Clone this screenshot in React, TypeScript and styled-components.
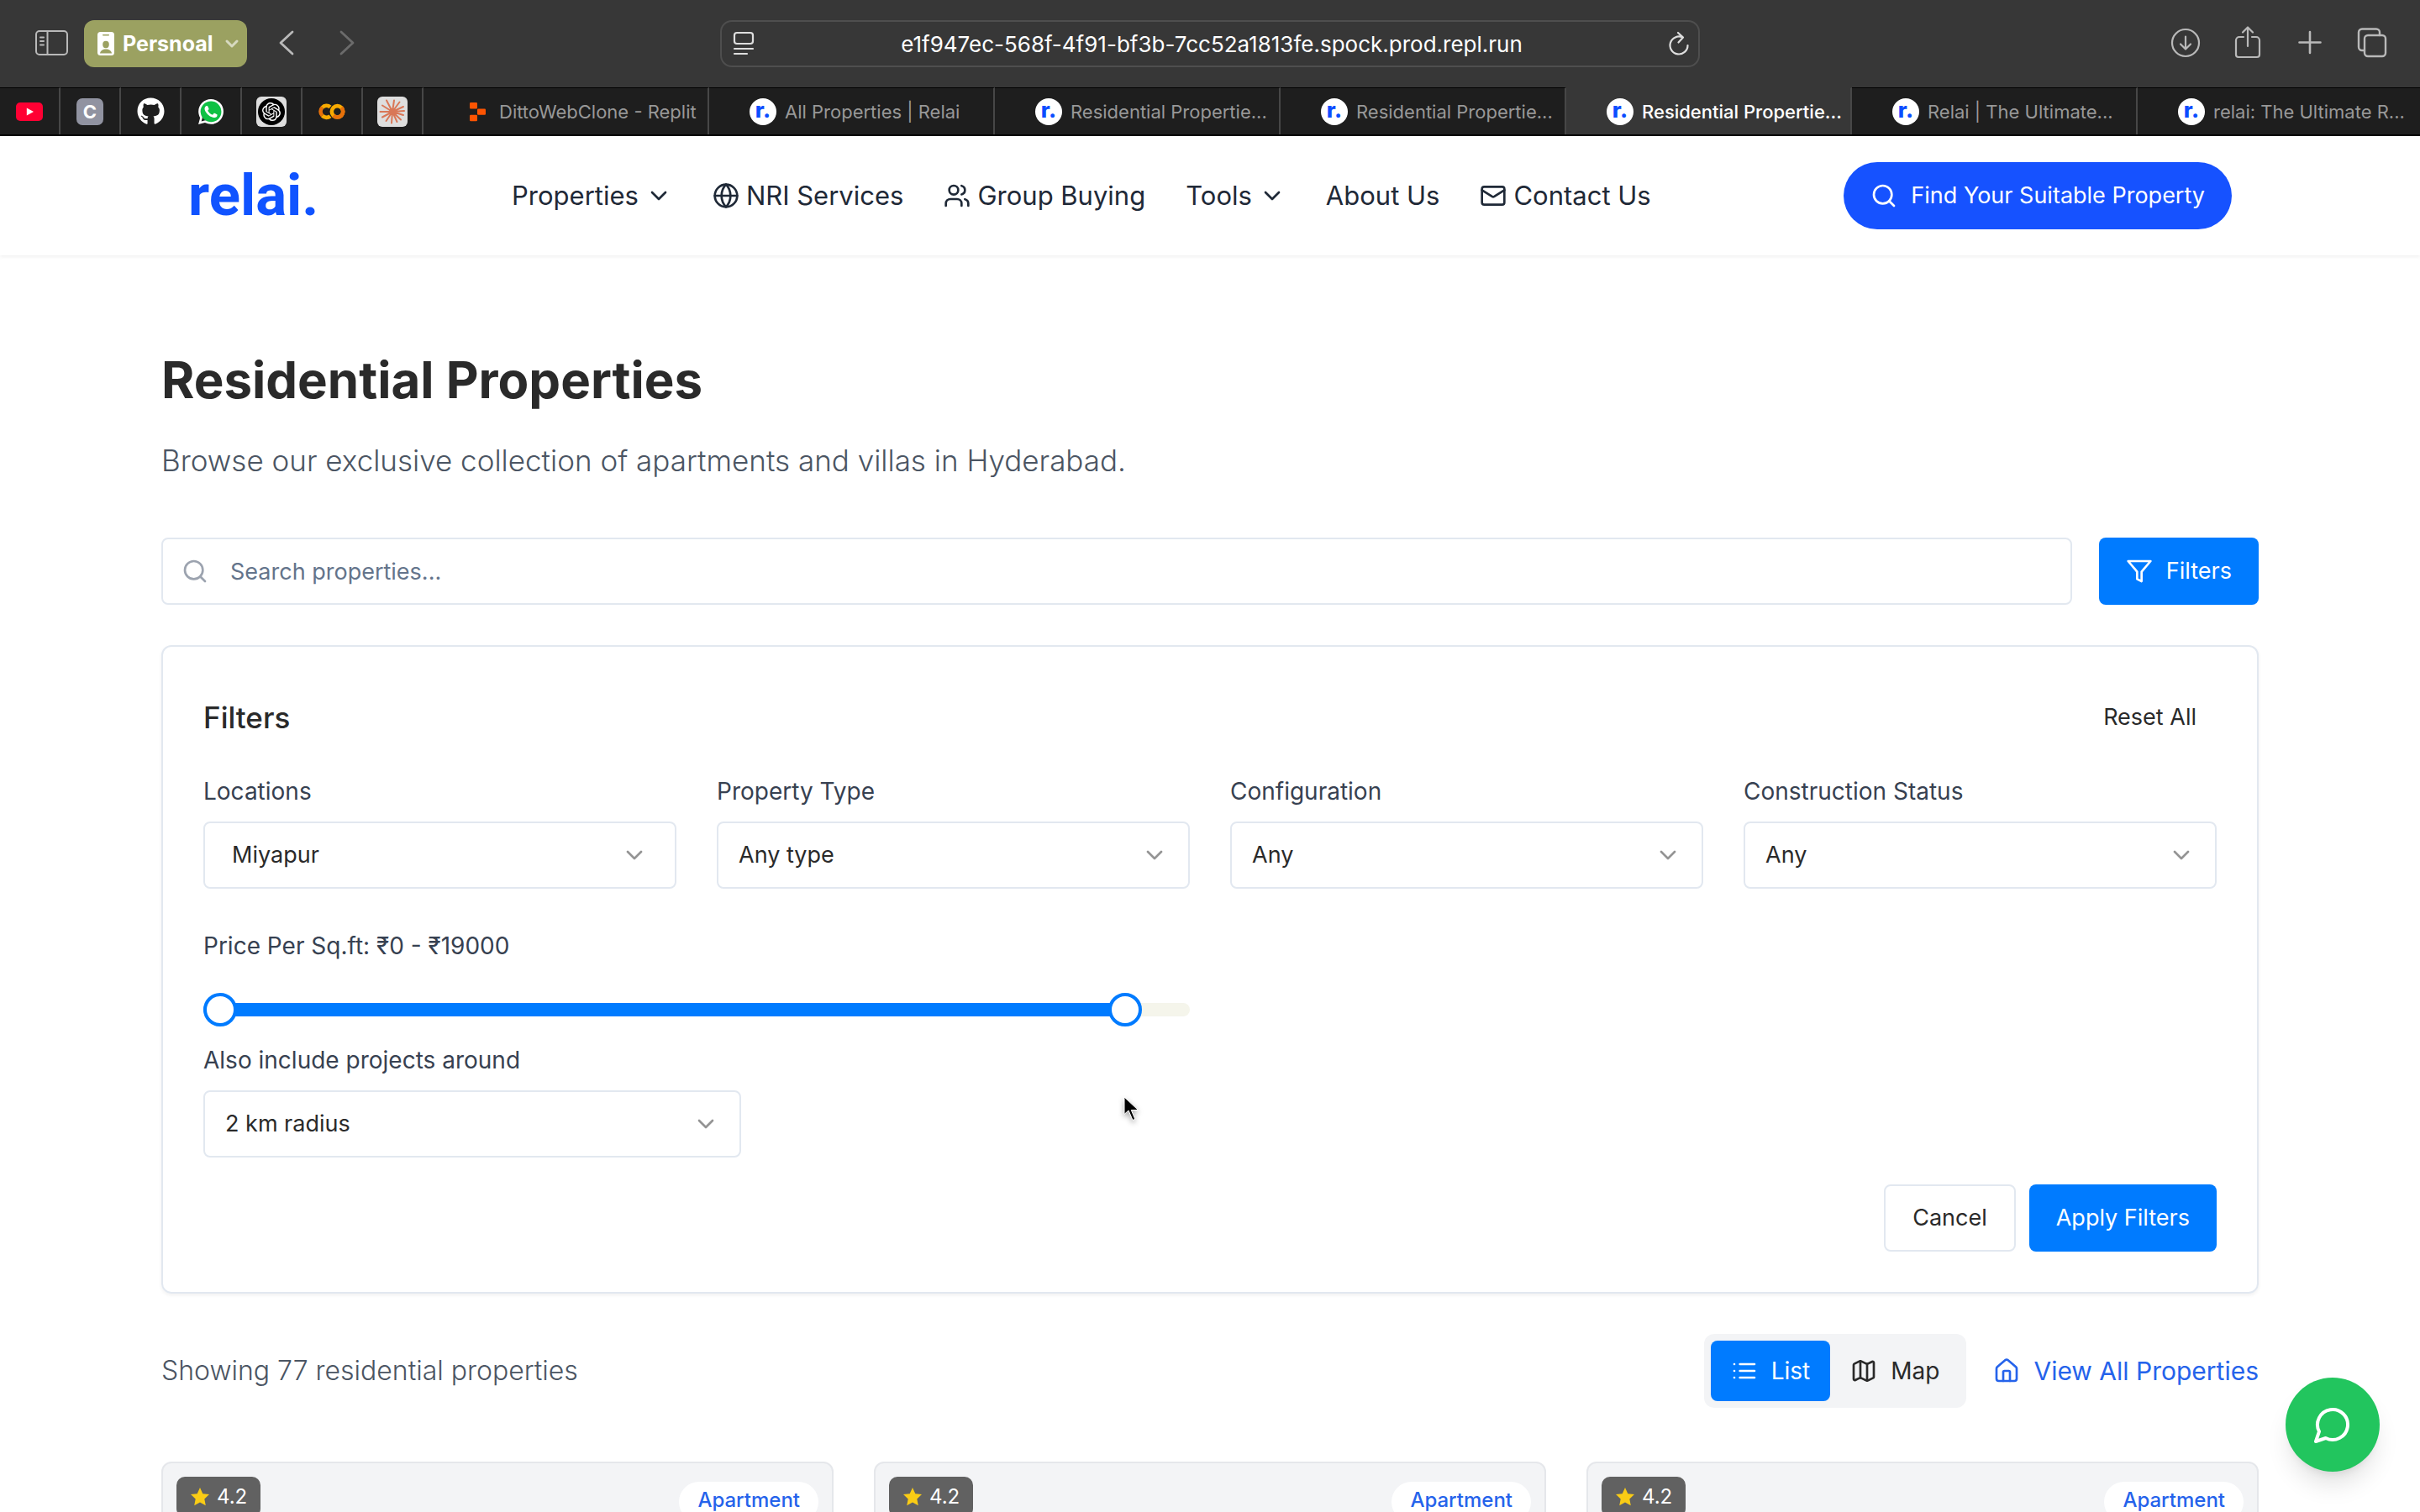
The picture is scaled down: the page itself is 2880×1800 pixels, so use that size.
import React from "react";
import styled, { createGlobalStyle } from "styled-components";
import { ChevronDown, Globe, House, Mail, Map as MapIcon, Search, Users } from "lucide-react";
import { FaGithub } from "react-icons/fa";
import { SiOpenai, SiWhatsapp } from "react-icons/si";

const GlobalStyle = createGlobalStyle`
  *, *::before, *::after { box-sizing: border-box; }
  body {
    margin: 0;
    background: #fff;
    color: #2a2a2a;
    font-family: Inter, "Noto Sans", sans-serif;
    font-size: 27px;
    line-height: 40px;
  }
  button, input, select { font: inherit; color: inherit; margin: 0; }
  h1, h2, p { margin: 0; }
  a { color: inherit; text-decoration: none; }
`;

/* ---------- Browser window ---------- */

const BrowserWindow = styled.div`
  display: flex;
  flex-direction: column;
  height: 100vh;
  overflow: hidden;
`;

const Toolbar = styled.div`
  display: grid;
  grid-template-columns: 1fr minmax(0, 1166px) 1fr;
  align-items: center;
  height: 104px;
  flex: none;
  background: #373737;
  color: #b9b9b9;
`;

const ToolGroup = styled.div<{ $end?: boolean }>`
  display: flex;
  align-items: center;
  gap: ${(p) => (p.$end ? 30 : 16)}px;
  padding: 0 35px 0 40px;
  justify-content: ${(p) => (p.$end ? "flex-end" : "flex-start")};
`;

const HistoryGroup = styled.div`
  display: flex;
  gap: 36px;
  padding-left: 13px;
`;

const ToolButton = styled.button<{ $width?: number }>`
  display: flex;
  align-items: center;
  justify-content: center;
  width: ${(p) => p.$width ?? 44}px;
  height: 56px;
  padding: 0;
  border: 0;
  background: none;
  flex: none;

  &:disabled { opacity: 0.4; }
`;

const ProfileButton = styled.button`
  display: flex;
  align-items: center;
  gap: 10px;
  height: 56px;
  padding: 0 6px 0 16px;
  border: 0;
  border-radius: 12px;
  background: #9ba161;
  color: #fff;
  font-size: 25px;
  font-weight: 700;
  white-space: nowrap;
`;

const AddressBar = styled.div`
  display: flex;
  align-items: center;
  height: 56px;
  padding: 0 8px 0 12px;
  border: 2px solid #4e4e4e;
  border-radius: 14px;
  color: #dedede;
`;

const AddressInput = styled.input`
  flex: 1;
  min-width: 0;
  height: 48px;
  border: 0;
  padding: 0;
  background: none;
  color: #fff;
  font-size: 26px;
  font-weight: 400;
  text-align: center;
  outline: none;
`;

const TabStrip = styled.div`
  display: flex;
  flex: none;
  height: 58px;
  overflow: hidden;
  background: #1e1e1e;
  border-bottom: 2px solid #000;
`;

const PinnedTab = styled.button`
  display: flex;
  align-items: center;
  justify-content: center;
  flex: none;
  width: 72px;
  padding: 0;
  border: 0;
  border-top: 1px solid #000;
  border-right: 2px solid #474747;
  background: none;
`;

const Tab = styled.button<{ $active?: boolean }>`
  display: flex;
  align-items: center;
  gap: 10px;
  flex: none;
  width: 340px;
  padding: 0 8px 0 48px;
  border: 0;
  border-top: 1px solid ${(p) => (p.$active ? "#373737" : "#000")};
  border-right: 2px solid #474747;
  background: ${(p) => (p.$active ? "#373737" : "none")};
  color: ${(p) => (p.$active ? "#fff" : "#989898")};
  font-size: 22px;
  font-weight: ${(p) => (p.$active ? 500 : 400)};
  line-height: 32px;
  white-space: nowrap;

  svg { flex: none; }
`;

const Favicon = styled.span`
  display: flex;
  align-items: center;
  justify-content: center;
  flex: none;
  width: 32px;
  height: 32px;
  border-radius: 50%;
  background: #fff;
  color: #0b4dff;
  font-size: 26px;
  font-weight: 800;
  line-height: 28px;
  padding-bottom: 4px;
`;

const LetterTile = styled.span`
  display: flex;
  align-items: center;
  justify-content: center;
  width: 32px;
  height: 32px;
  border-radius: 7px;
  background: #9193a1;
  color: #fff;
  font-size: 22px;
  font-weight: 700;
  line-height: 32px;
`;

const LightTile = styled.span`
  display: flex;
  align-items: center;
  justify-content: center;
  width: 36px;
  height: 36px;
  border-radius: 6px;
  background: #dedede;
`;

const RoundBadge = styled.span<{ $color: string }>`
  display: flex;
  align-items: center;
  justify-content: center;
  width: 32px;
  height: 32px;
  border-radius: 50%;
  background: ${(p) => p.$color};
  color: #fff;
`;

const WhatsAppMark = styled(SiWhatsapp)`
  width: 30px;
  height: 30px;
  color: #fff;
  background: radial-gradient(circle at 52% 48%, #0fc144 58%, transparent 60%);
`;

const Page = styled.div`
  position: relative;
  flex: 1;
  min-height: 0;
  overflow: hidden;
`;

/* ---------- Site header ---------- */

const Header = styled.header`
  height: 142px;
  box-shadow: 0 2px 4px rgba(0, 0, 0, 0.06);
`;

const HeaderInner = styled.div`
  display: flex;
  align-items: center;
  justify-content: space-between;
  max-width: 2496px;
  height: 100%;
  margin: 0 auto;
  padding: 0 32px;
`;

const Logo = styled.a`
  color: #1053ff;
  font-family: Roboto, Inter, sans-serif;
  font-size: 69px;
  font-weight: 700;
  line-height: 80px;
`;

const Nav = styled.nav`
  display: flex;
  align-items: center;
  gap: 48px;
`;

const navItem = `
  display: flex;
  align-items: center;
  gap: 8px;
  padding: 0;
  border: 0;
  background: none;
  color: #1f2937;
  font-size: 31px;
  font-weight: 400;
  line-height: 48px;
  white-space: nowrap;
`;

const NavLink = styled.a`${navItem}`;
const NavMenu = styled.button`${navItem}`;

const Button = styled.button<{ $kind?: "primary" | "outline" | "ghost"; $pill?: boolean }>`
  display: flex;
  align-items: center;
  justify-content: center;
  gap: 16px;
  flex: none;
  height: ${(p) => (p.$kind === "ghost" ? 72 : 80)}px;
  padding: 0 ${(p) => (p.$kind === "ghost" ? 24 : 32)}px;
  border: ${(p) => (p.$kind === "outline" ? "2px solid #e2e8f0" : "0")};
  border-radius: ${(p) => (p.$pill ? 40 : 8)}px;
  background: ${(p) => (p.$pill ? "#1652ff" : p.$kind === "primary" ? "#007bff" : "transparent")};
  color: ${(p) => (p.$kind === "primary" ? "#fff" : "#2a2a2a")};
  font-size: 27px;
  font-weight: 400;
  white-space: nowrap;
`;

/* ---------- Listing page ---------- */

const Main = styled.main`
  max-width: 2496px;
  margin: 0 auto;
  padding-top: 112px;
`;

const Title = styled.h1`
  font-size: 60px;
  font-weight: 700;
  line-height: 72px;
  color: #2a2a2a;
`;

const Subtitle = styled.p`
  margin-top: 32px;
  color: #4b5563;
  font-size: 35px;
  font-weight: 300;
  line-height: 56px;
`;

const SearchRow = styled.form`
  display: flex;
  gap: 32px;
  margin-top: 64px;
`;

const SearchBox = styled.label`
  display: flex;
  align-items: center;
  gap: 26px;
  flex: 1;
  height: 80px;
  padding: 0 22px;
  border: 2px solid #e2e8f0;
  border-radius: 8px;
  color: #9ca3af;
`;

const SearchInput = styled.input`
  flex: 1;
  height: 72px;
  padding: 0;
  border: 0;
  outline: none;
  background: none;
  color: #2a2a2a;

  &::placeholder { color: #64748b; opacity: 1; }
`;

const Panel = styled.section`
  margin-top: 48px;
  padding: 48px;
  border: 2px solid #e2e8f0;
  border-radius: 12px;
  box-shadow: 0 2px 4px rgba(0, 0, 0, 0.06);
`;

const PanelHead = styled.div`
  display: flex;
  align-items: center;
  justify-content: space-between;
  margin-bottom: 32px;
`;

const PanelTitle = styled.h2`
  font-size: 35px;
  font-weight: 500;
  line-height: 48px;
`;

const FieldGrid = styled.div`
  display: grid;
  grid-template-columns: repeat(4, 1fr);
  gap: 48px;
`;

const Field = styled.div`
  display: flex;
  flex-direction: column;
  gap: 16px;
`;

const Label = styled.label`
  color: #374151;
  font-size: 28px;
`;

const SelectWrap = styled.div<{ $inset?: number }>`
  display: grid;
  align-items: center;

  select, svg { grid-area: 1 / 1; }
  svg {
    justify-self: end;
    margin-right: ${(p) => p.$inset ?? 26}px;
    color: #949494;
    pointer-events: none;
  }
  select { padding-left: ${(p) => (p.$inset ?? 26) - 2}px; }
`;

const Select = styled.select`
  appearance: none;
  width: 100%;
  height: 80px;
  border: 2px solid #e2e8f0;
  border-radius: 8px;
  background: #fff;
  color: #2a2a2a;
`;

const PriceField = styled.fieldset`
  grid-column: span 2;
  display: flex;
  flex-direction: column;
  gap: 36px;
  min-width: 0;
  margin: 0;
  padding: 0;
  border: 0;
`;

const Range = styled.div`
  display: grid;
  align-items: center;
  height: 40px;
`;

const RangeTrack = styled.div`
  grid-area: 1 / 1;
  height: 16px;
  border-radius: 8px;
  background: #f5f5eb;
  overflow: hidden;
`;

const RangeFill = styled.div`
  height: 100%;
  background: #007bff;
`;

const RangeInput = styled.input`
  grid-area: 1 / 1;
  appearance: none;
  width: 100%;
  height: 40px;
  background: none;
  pointer-events: none;

  &::-webkit-slider-thumb {
    appearance: none;
    width: 40px;
    height: 40px;
    border: 4px solid #007bff;
    border-radius: 50%;
    background: #fff;
    pointer-events: auto;
  }
`;

const RadiusField = styled(Field)`
  width: 640px;
  max-width: 100%;
  margin-top: 20px;
`;

const PanelActions = styled.div`
  display: flex;
  justify-content: flex-end;
  gap: 16px;
  margin-top: 32px;
`;

const ResultBar = styled.div`
  display: flex;
  align-items: center;
  gap: 32px;
  margin-top: 48px;
`;

const ResultCount = styled.p`
  flex: 1;
  color: #4b5563;
  font-size: 32px;
  font-weight: 300;
`;

const ViewToggle = styled.div`
  display: flex;
  padding: 8px;
  border-radius: 12px;
  background: #f3f4f6;
`;

const ToggleButton = styled(Button)`
  height: 72px;
  padding: 0 24px;
  font-size: 28px;
`;

const AllLink = styled.a`
  display: flex;
  align-items: center;
  gap: 16px;
  color: #2563eb;
  font-size: 30px;
`;

const CardGrid = styled.div`
  display: grid;
  grid-template-columns: repeat(3, 1fr);
  gap: 48px;
  margin-top: 64px;
`;

const Card = styled.article`
  display: flex;
  align-items: flex-start;
  justify-content: space-between;
  height: 480px;
  padding: 16px;
  border: 2px solid #e5e7eb;
  border-radius: 12px;
  background: #f3f4f6;
`;

const Rating = styled.span`
  display: flex;
  align-items: center;
  gap: 8px;
  height: 48px;
  padding: 0 16px;
  border-radius: 10px;
  background: #616161;
  color: #fff;
  font-size: 24px;
`;

const TypeBadge = styled.span`
  height: 48px;
  margin-top: 6px;
  padding: 0 22px;
  border-radius: 24px;
  background: #fff;
  color: #2563eb;
  font-size: 24px;
  font-weight: 500;
  line-height: 44px;
`;

const ChatButton = styled.button`
  position: absolute;
  right: 48px;
  bottom: 48px;
  display: flex;
  align-items: center;
  justify-content: center;
  width: 112px;
  height: 112px;
  padding: 0;
  border: 0;
  border-radius: 50%;
  background: #22c55e;
  color: #fff;
  box-shadow: 0 20px 30px -6px rgba(0, 0, 0, 0.12), 0 8px 12px -8px rgba(0, 0, 0, 0.12);
`;

const Pointer = styled.svg`
  position: absolute;
  left: 46.4%;
  top: 1142px;
  filter: drop-shadow(0 3px 3px rgba(0, 0, 0, 0.35));
`;

/* ---------- Drawings ---------- */

const Stroke = ({ size = 32, width = 2, box = "0 0 24 24", children }: {
  size?: number; width?: number; box?: string; children: React.ReactNode;
}) => (
  <svg width={size} height={size} viewBox={box} fill="none" stroke="currentColor" strokeWidth={width}
    strokeLinecap="round" strokeLinejoin="round" aria-hidden="true">{children}</svg>
);

const FilterIcon = () => (
  <Stroke><polygon points="22 3 2 3 10 12.46 10 19 14 21 14 12.46 22 3" /></Stroke>
);

const ListIcon = () => (
  <Stroke><path d="M8 6h13M8 12h13M8 18h13M3 6h.01M3 12h.01M3 18h.01" /></Stroke>
);

const SidebarIcon = () => (
  <Stroke size={44} width={2} box="0 0 44 44">
    <rect x="3" y="7" width="37" height="28" rx="4" />
    <path d="M16.500 7v28M8 14.500h4M8 19h4M8 23.500h4" />
  </Stroke>
);

const ProfileIcon = () => (
  <svg width="20" height="28" viewBox="0 0 20 28" aria-hidden="true">
    <rect width="20" height="28" rx="3.500" fill="#fff" />
    <rect x="6" y="3" width="8" height="1.500" rx=".7" fill="#9ba161" />
    <ellipse cx="10" cy="15" rx="3.800" ry="4.200" fill="#9ba161" />
    <path d="M3 25.500c.6-3.400 3.500-5 7-5s6.400 1.600 7 5z" fill="#9ba161" />
  </svg>
);

const DownloadIcon = () => (
  <Stroke size={44} width={2.2} box="0 0 44 44">
    <circle cx="22" cy="21" r="16" /><path d="M22 13.500v14.500M16 22.500l6 6 6-6" />
  </Stroke>
);

const ShareIcon = () => (
  <Stroke size={44} width={2.2} box="0 0 44 44">
    <path d="M17 14h-5a4 4 0 0 0-4 4v17a3 3 0 0 0 3 3h22a3 3 0 0 0 3-3V18a4 4 0 0 0-4-4h-5M22 25V3M16 8.500l6-6 6 6" />
  </Stroke>
);

const PlusIcon = () => (
  <Stroke size={44} width={2.6} box="0 0 44 44"><path d="M22 8v25M9.500 20.500h25" /></Stroke>
);

const TabsIcon = () => (
  <Stroke size={44} width={2.4} box="0 0 44 44">
    <rect x="13" y="12" width="25" height="25" rx="4" />
    <path d="M13 30h-3a4 4 0 0 1-4-4V8.500a4 4 0 0 1 4-4h17a4 4 0 0 1 4 4V12" />
  </Stroke>
);

const ReaderIcon = () => (
  <Stroke size={30} width={2.2} box="0 0 30 30">
    <rect x="3" y="2" width="22" height="13" rx="3" /><path d="M3 21h22M3 27h15" />
  </Stroke>
);

const ReloadIcon = () => (
  <Stroke size={30} width={2.2} box="0 0 30 30">
    <path d="M19.500 7.500A10.500 10.500 0 1 0 25.500 17M14 2l6 5.500-5.500 6" />
  </Stroke>
);

const YouTubeIcon = () => (
  <svg width="32" height="22" viewBox="0 0 32 22" aria-hidden="true">
    <rect width="32" height="22" rx="5" fill="#ff0033" /><path d="M12.800 6.600v8.800l8.200-4.400z" fill="#fff" />
  </svg>
);

const ColabIcon = () => (
  <svg width="32" height="20" viewBox="0 0 32 20" fill="none" strokeWidth="4.600" aria-hidden="true">
    <path d="M14 4.500A6.700 6.700 0 0 0 4.600 5" stroke="#f9ab00" />
    <path d="M4.600 4.900a6.700 6.700 0 0 0 0 9.700" stroke="#e8710a" />
    <path d="M4.600 14.600a6.700 6.700 0 0 0 9.400.6" stroke="#f9ab00" />
    <circle cx="22.500" cy="9.800" r="6.700" stroke="#f9ab00" />
    <path d="M27.300 5a6.700 6.700 0 0 1-9.500 9.500" stroke="#e8710a" />
  </svg>
);

const ClaudeIcon = () => (
  <svg width="32" height="32" viewBox="-16 -16 32 32" stroke="#d97757" strokeWidth="2" strokeLinecap="round" aria-hidden="true">
    <circle r="4" fill="#d97757" stroke="none" />
    <path d="M0 0L2-13.500M0 0L8.500-11.500M0 0L13-6M0 0L14-1M0 0L13 4M0 0L10 9.500M0 0L5.500 12M0 0L-1 13.500M0 0L-7.500 11M0 0L-12 6.500M0 0L-14.500 0M0 0L-12-7.500M0 0L-7-13.500" />
  </svg>
);

const ReplitIcon = () => (
  <svg width="32" height="32" viewBox="0 0 32 32" fill="#fd5402" aria-hidden="true">
    <rect x="7" y="5" width="9" height="7.400" rx="1.200" />
    <rect x="16" y="12.400" width="10" height="7.400" rx="1.200" />
    <rect x="7" y="19.800" width="9" height="7.400" rx="1.200" />
  </svg>
);

/* ---------- Data ---------- */

const TABS = [
  { title: "All Properties | Relai" },
  { title: "Residential Propertie..." },
  { title: "Residential Propertie..." },
  { title: "Residential Propertie...", active: true },
  { title: "Relai | The Ultimate..." },
  { title: "relai: The Ultimate R..." },
];

const FILTERS = [
  { id: "locations", label: "Locations", value: "Miyapur", inset: 34 },
  { id: "type", label: "Property Type", value: "Any type" },
  { id: "configuration", label: "Configuration", value: "Any" },
  { id: "status", label: "Construction Status", value: "Any" },
];

const PRICE_MAX = 20000;
const price = { low: 0, high: 19000 };

const PINNED = [
  { name: "YouTube", icon: <YouTubeIcon /> },
  { name: "C", icon: <LetterTile>C</LetterTile> },
  { name: "GitHub", icon: <FaGithub size={33} color="#fff" /> },
  { name: "WhatsApp", icon: <WhatsAppMark /> },
  { name: "ChatGPT", icon: <LightTile><RoundBadge $color="#000"><SiOpenai size={22} /></RoundBadge></LightTile> },
  { name: "Colab", icon: <ColabIcon /> },
  { name: "Claude", icon: <LightTile><ClaudeIcon /></LightTile> },
];

const SelectField = ({ id, label, value, inset }: { id: string; label: string; value: string; inset?: number }) => (
  <>
    <Label htmlFor={id}>{label}</Label>
    <SelectWrap $inset={inset}>
      <Select id={id} defaultValue={value}><option>{value}</option></Select>
      <ChevronDown size={32} strokeWidth={2} />
    </SelectWrap>
  </>
);

export default function App() {
  return (
    <BrowserWindow>
      <GlobalStyle />
      <Toolbar>
        <ToolGroup>
          <ToolButton aria-label="Sidebar"><SidebarIcon /></ToolButton>
          <ProfileButton>
            <ProfileIcon />
            Persnoal
            <Stroke size={24} width={3}><path d="M6 9l6 6 6-6" opacity=".6" /></Stroke>
          </ProfileButton>
          <HistoryGroup>
            <ToolButton $width={36} aria-label="Back">
              <Stroke size={36} width={2.8} box="0 0 36 36"><path d="M25 4L11 17l14 13" /></Stroke>
            </ToolButton>
            <ToolButton $width={36} aria-label="Forward" disabled>
              <Stroke size={36} width={2.8} box="0 0 36 36"><path d="M11 4l14 13-14 13" /></Stroke>
            </ToolButton>
          </HistoryGroup>
        </ToolGroup>
        <AddressBar>
          <ReaderIcon />
          <AddressInput aria-label="Address" defaultValue="e1f947ec-568f-4f91-bf3b-7cc52a1813fe.spock.prod.repl.run" />
          <ReloadIcon />
        </AddressBar>
        <ToolGroup $end>
          <ToolButton aria-label="Downloads"><DownloadIcon /></ToolButton>
          <ToolButton aria-label="Share"><ShareIcon /></ToolButton>
          <ToolButton aria-label="New tab"><PlusIcon /></ToolButton>
          <ToolButton aria-label="All tabs"><TabsIcon /></ToolButton>
        </ToolGroup>
      </Toolbar>
      <TabStrip>
        {PINNED.map((p) => <PinnedTab key={p.name} aria-label={p.name}>{p.icon}</PinnedTab>)}
        <Tab><ReplitIcon />DittoWebClone - Replit</Tab>
        {TABS.map((t, i) => (
          <Tab key={i} $active={t.active}><Favicon>r.</Favicon>{t.title}</Tab>
        ))}
      </TabStrip>

      <Page>
        <Header>
          <HeaderInner>
            <Logo href="#">relai.</Logo>
            <Nav>
              <NavMenu>Properties<ChevronDown size={32} /></NavMenu>
              <NavLink href="#"><Globe size={32} />NRI Services</NavLink>
              <NavLink href="#"><Users size={32} />Group Buying</NavLink>
              <NavMenu>Tools<ChevronDown size={32} /></NavMenu>
              <NavLink href="#">About Us</NavLink>
              <NavLink href="#"><Mail size={32} />Contact Us</NavLink>
            </Nav>
            <Button $kind="primary" $pill><Search size={32} />Find Your Suitable Property</Button>
          </HeaderInner>
        </Header>

        <Main>
          <Title>Residential Properties</Title>
          <Subtitle>Browse our exclusive collection of apartments and villas in Hyderabad.</Subtitle>

          <SearchRow>
            <SearchBox>
              <Search size={32} />
              <SearchInput aria-label="Search properties" placeholder="Search properties..." />
            </SearchBox>
            <Button type="button" $kind="primary"><FilterIcon />Filters</Button>
          </SearchRow>

          <Panel>
            <PanelHead>
              <PanelTitle>Filters</PanelTitle>
              <Button $kind="ghost">Reset All</Button>
            </PanelHead>
            <FieldGrid>
              {FILTERS.map((f) => <Field key={f.id}><SelectField {...f} /></Field>)}
              <PriceField>
                <Label htmlFor="price-high">Price Per Sq.ft: ₹{price.low} - ₹{price.high}</Label>
                <Range>
                  <RangeTrack><RangeFill style={{ width: `${(price.high / PRICE_MAX) * 100}%` }} /></RangeTrack>
                  <RangeInput type="range" aria-label="Lowest price" min={0} max={PRICE_MAX} defaultValue={price.low} />
                  <RangeInput type="range" id="price-high" min={0} max={PRICE_MAX} defaultValue={price.high} />
                </Range>
              </PriceField>
            </FieldGrid>
            <RadiusField><SelectField id="radius" label="Also include projects around" value="2 km radius" /></RadiusField>
            <PanelActions>
              <Button $kind="outline">Cancel</Button>
              <Button $kind="primary">Apply Filters</Button>
            </PanelActions>
          </Panel>

          <ResultBar>
            <ResultCount>Showing 77 residential properties</ResultCount>
            <ViewToggle>
              <ToggleButton $kind="primary"><ListIcon />List</ToggleButton>
              <ToggleButton $kind="ghost"><MapIcon size={32} />Map</ToggleButton>
            </ViewToggle>
            <AllLink href="#"><House size={32} />View All Properties</AllLink>
          </ResultBar>

          <CardGrid>
            {[0, 1, 2].map((n) => (
              <Card key={n}>
                <Rating>
                  <svg width="24" height="24" viewBox="0 0 24 24" fill="#facc15" aria-hidden="true">
                    <path d="M12 1l3.300 7.200 7.700.9-5.700 5.300 1.500 7.800L12 18.400l-6.800 3.800 1.500-7.800L1 9.100l7.700-.9z" />
                  </svg>
                  4.2
                </Rating>
                <TypeBadge>Apartment</TypeBadge>
              </Card>
            ))}
          </CardGrid>
        </Main>

        <ChatButton aria-label="Chat">
          <Stroke size={48}><path d="M7.900 20A9 9 0 1 0 4 16.100L2 22Z" /></Stroke>
        </ChatButton>
        <Pointer width="22" height="34" viewBox="0 0 22 34" aria-hidden="true">
          <path d="M2 2v20.500l5-4.500 5 11.500 2.800-1.200L10.300 17.500H18.500z" fill="#000" stroke="#fff" strokeWidth="1" />
        </Pointer>
      </Page>
    </BrowserWindow>
  );
}
